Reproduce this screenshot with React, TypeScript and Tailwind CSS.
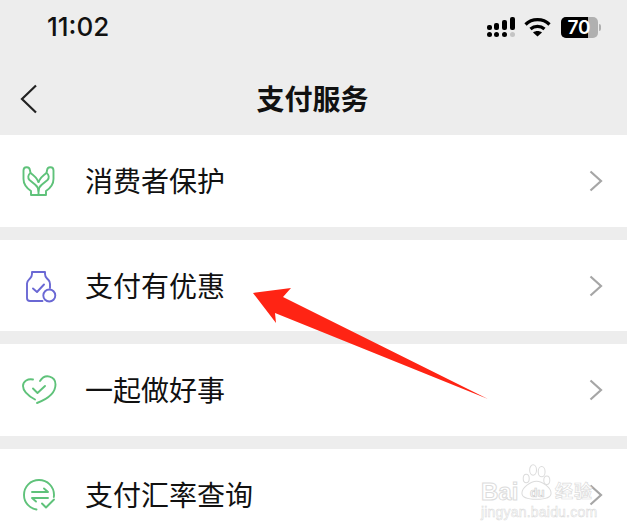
import React from 'react';

const cjk = "font-['Noto_Sans_CJK_SC','Noto_Sans',sans-serif]";

const Chevron = () => (
  <svg width="16" height="24" viewBox="0 0 16 24" fill="none" stroke="#a6a6a6" strokeWidth="2.2" className="shrink-0">
    <path d="M2.5 2.5 13 12 2.5 21.5" />
  </svg>
);

const HandsIcon = () => (
  <svg width="36" height="34" viewBox="0 0 36 34" fill="none" stroke="#5fc27a" strokeWidth="1.9" strokeLinejoin="round" strokeLinecap="round" className="overflow-visible">
    <path d="M17.5 31H10V27C5.5 24 2.5 20.5 2.5 15V6.5C2.5 2.5 8.5 2 9 6.5L9.5 9C7 10.5 6.5 14 8.5 16L14 20.5C16.5 22.5 17.5 24 17.5 27V31Z" />
    <path d="M9.5 9C12.5 11 15.5 13.5 17.5 18" />
    <path d="M17.5 31H25V27C29.5 24 32.5 20.5 32.5 15V6.5C32.5 2.5 26.5 2 26 6.5L25.5 9C28 10.5 28.5 14 26.5 16L21 20.5C18.5 22.5 17.5 24 17.5 27" />
    <path d="M25.5 9C22.5 11 19.5 13.5 17.5 18" />
  </svg>
);

const BottleIcon = () => (
  <svg width="36" height="36" viewBox="0 0 36 36" fill="none" stroke="#6a68d4" strokeWidth="1.9" strokeLinejoin="round" strokeLinecap="round" className="overflow-visible">
    <path d="M21.5 32H9C7 32 6 31 6 29V14.5C6 12 7.5 11 9 9.5C10.5 8 11 7 11 5V3H24V5C24 7 24.5 8 26 9.5L27.5 11C28.5 12 29 13 29 15V19" />
    <path d="M12 19.5 16 23 23 15.5" />
    <circle cx="28.3" cy="26.5" r="6" />
  </svg>
);

const HeartIcon = () => (
  <svg width="36" height="34" viewBox="0 0 36 34" fill="none" stroke="#5fc27a" strokeWidth="1.9" strokeLinecap="round" strokeLinejoin="round" className="overflow-visible">
    <path d="M12 6.5C7 5.5 2 8 2 13C2 19 8.5 23.5 14 26.5" />
    <path d="M16 30C24 27 34.5 21 34.5 11.5C34.5 3 24 0 19 8" />
    <path d="M12 15.5 16.5 20 24 13" />
  </svg>
);

const ExchangeIcon = () => (
  <svg width="36" height="34" viewBox="0 0 36 34" fill="none" stroke="#5fc27a" strokeWidth="1.9" strokeLinecap="round" strokeLinejoin="round" className="overflow-visible">
    <path d="M15.5 31.5C8.5 30.5 3 24.5 3 17C3 8.5 9.5 2 18 2C26.5 2 33 8.5 33 17C33 18 32.9 18.5 32.8 19" />
    <path d="M11 14H27L23 10.5" />
    <path d="M27 20H11L15 23.5" />
    <path d="M21 25.5 25 29.5 33 21.5" />
  </svg>
);

const SignalBars = () => (
  <svg width="28" height="20" viewBox="0 0 28 20">
    <rect x="0" y="8" width="5" height="5" rx="2" fill="#000" />
    <rect x="7" y="6" width="5" height="7" rx="2" fill="#000" />
    <rect x="15" y="3" width="5" height="10" rx="2" fill="#000" />
    <rect x="23" y="0" width="5" height="13" rx="2" fill="#000" />
    <circle cx="2.5" cy="17.5" r="2.5" fill="#000" />
    <circle cx="9.5" cy="17.5" r="2.5" fill="#000" />
    <circle cx="17.5" cy="17.5" r="2.5" fill="#000" />
    <circle cx="25.5" cy="17.5" r="2.5" fill="#c4c4c4" />
  </svg>
);

const Wifi = () => (
  <svg width="27" height="20" viewBox="0 0 27 20" fill="none" stroke="#000" strokeWidth="3.2">
    <path d="M1.5 7.5C8 1 19 1 25.5 7.5" />
    <path d="M6.5 12C10.5 8.5 16.5 8.5 20.5 12" />
    <path d="M13.5 19.5 9 15.5C11.5 13.5 15.5 13.5 18 15.5Z" fill="#000" stroke="none" />
  </svg>
);

const Row = ({ icon, label }: { icon: React.ReactNode; label: string }) => (
  <div className="h-full flex items-center bg-white pl-[21px] pr-[23px]">
    <div className="w-[34px] h-[34px] shrink-0">{icon}</div>
    <span className={`ml-[30px] -mt-[2px] flex-1 text-[28px] leading-none text-[#111] ${cjk}`}>{label}</span>
    <Chevron />
  </div>
);

export default function App() {
  return (
    <div className="relative w-[627px] h-[532px] overflow-hidden bg-[#ededed]">
      {/* status bar */}
      <div className="h-[53px] flex items-center pl-[47px] pr-[26px] pt-[1px]">
        <span className="text-[26px] font-medium text-[#111] font-['Inter',sans-serif] leading-none">11:02</span>
        <div className="ml-auto flex items-center">
          <SignalBars />
          <div className="ml-[9px]"><Wifi /></div>
          <div className="ml-[10px] relative flex h-[21px] w-[37px] rounded-[5px] overflow-hidden bg-[#b0b0b0]">
            <div className="w-[27px] bg-black" />
            <span className="absolute inset-0 flex items-center justify-center pr-[1px] text-[19px] font-semibold text-white font-['Inter',sans-serif] leading-none">70</span>
          </div>
          <div className="ml-[1px] w-[2px] h-[7px] bg-[#b0b0b0] rounded-r-sm" />
        </div>
      </div>

      {/* nav bar */}
      <div className="relative h-[82px] flex items-center justify-center">
        <svg width="18" height="30" viewBox="0 0 18 30" fill="none" stroke="#222" strokeWidth="2.2" className="absolute left-[20px] top-[31px]">
          <path d="M16 1.5 2 15 16 28.5" />
        </svg>
        <span className={`text-[28px] font-bold text-[#111] leading-none mt-[8px] mr-[2px] ${cjk}`}>支付服务</span>
      </div>

      {/* rows */}
      <div className="grid grid-rows-[92px_91px_92px_92px] gap-y-[13px]">
        <Row icon={<HandsIcon />} label="消费者保护" />
        <Row icon={<BottleIcon />} label="支付有优惠" />
        <Row icon={<HeartIcon />} label="一起做好事" />
        <Row icon={<ExchangeIcon />} label="支付汇率查询" />
      </div>

      {/* red annotation arrow */}
      <svg className="absolute left-0 top-0" width="627" height="532" viewBox="0 0 627 532">
        <polygon points="253,293 291,288 283,297 488,399 275,313 276,323" fill="#ff2414" />
      </svg>

      {/* watermark */}
      <div className="absolute left-[481px] top-[464px] w-[120px] h-[56px] whitespace-nowrap">
        <span className="absolute left-0 top-[16px] text-[24px] leading-none font-bold text-white font-['Liberation_Sans',sans-serif] [-webkit-text-stroke:1px_#dcdcdc]">Bai</span>
        <svg className="absolute left-[39px] top-0" width="33" height="36" viewBox="0 0 38 42" fill="#fff" stroke="#dcdcdc" strokeWidth="1.2">
          <ellipse cx="7" cy="17" rx="3.5" ry="5" />
          <ellipse cx="15" cy="7" rx="4" ry="6" />
          <ellipse cx="25" cy="9" rx="4" ry="6" />
          <ellipse cx="31" cy="19" rx="3.5" ry="5" />
          <path d="M19 20C12 20 2 28 2 34C2 39 8 41 19 41C30 41 36 39 36 34C36 28 26 20 19 20Z" />
        </svg>
        <span className="absolute left-[49px] top-[23px] text-[12px] leading-none font-bold text-white font-['Liberation_Sans',sans-serif] [-webkit-text-stroke:0.7px_#d0d0d0]">du</span>
        <span className={`absolute left-[74px] top-[17px] text-[18px] leading-none font-bold text-white [-webkit-text-stroke:0.7px_#dcdcdc] tracking-[1px] ${cjk}`}>经验</span>
        <span className="absolute left-0 top-[41px] text-[14px] leading-none tracking-[0.2px] text-white font-['Liberation_Sans',sans-serif] [-webkit-text-stroke:0.5px_#d8d8d8]">jingyan.baidu.com</span>
      </div>
    </div>
  );
}
